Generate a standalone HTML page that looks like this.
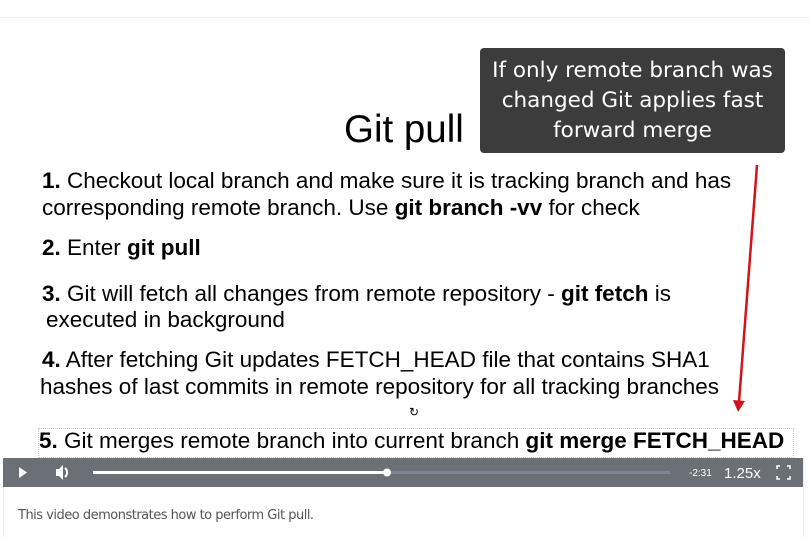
<!DOCTYPE html>
<html><head><style>
body{margin:0;width:809px;height:537px;background:#fff;position:relative;overflow:hidden;font-family:"Liberation Sans",Arial,sans-serif;}
.a{position:absolute;white-space:nowrap;color:#000;}
.t{font-size:22.5px;left:42px;}
</style></head><body>
<div style="position:absolute;left:0;top:17px;width:809px;height:1px;background:#eee"></div>
<div style="position:absolute;left:3px;top:458px;width:1px;height:79px;background:#eee"></div>
<div style="position:absolute;left:803px;top:458px;width:1px;height:79px;background:#eee"></div>
<div class="a" style="left:344px;top:108px;font-size:38.5px">Git pull</div>
<div style="position:absolute;left:480px;top:48px;width:305px;height:105px;background:#3c3c3c;border-radius:4px;color:#fff;font-family:'DejaVu Sans',sans-serif;font-size:21.5px;line-height:30px;text-align:center;padding-top:8px;box-sizing:border-box">If only remote branch was<br>changed Git applies fast<br>forward merge</div>
<svg style="position:absolute;left:0;top:0" width="809" height="537"><line x1="757" y1="165" x2="739" y2="402" stroke="#d0141a" stroke-width="2.5"/><polygon points="733,400 745,401 738,412" fill="#d0141a"/></svg>
<div class="a t" style="top:168px"><b>1.</b> Checkout local branch and make sure it is tracking branch and has</div>
<div class="a t" style="top:195px">corresponding remote branch. Use <b>git branch -vv</b> for check</div>
<div class="a t" style="top:235px"><b>2.</b> Enter <b>git pull</b></div>
<div class="a t" style="top:281px"><b>3.</b> Git will fetch all changes from remote repository - <b>git fetch</b> is</div>
<div class="a t" style="top:307px;left:46px">executed in background</div>
<div class="a t" style="top:347px"><b>4.</b> After fetching Git updates FETCH_HEAD file that contains SHA1</div>
<div class="a t" style="top:374px;left:40px">hashes of last commits in remote repository for all tracking branches</div>
<div class="a" style="left:409px;top:405px;font-size:12px">↻</div>
<div style="position:absolute;left:38px;top:428px;width:754px;height:28px;border:1px dotted #ccc"></div>
<div class="a t" style="top:428px;left:39px;font-size:22.5px"><b>5.</b> Git merges remote branch into current branch <b>git merge FETCH_HEAD</b></div>
<div style="position:absolute;left:3px;top:458px;width:800px;height:29px;background:#6b7077"></div>
<svg style="position:absolute;left:0;top:458px" width="809" height="29">
<polygon points="19,9 19,20 27,14.5" fill="#fff"/>
<path d="M56,11h3l4,-4v15l-4,-4h-3z" fill="#fff"/><path d="M65,10a6,6 0 0 1 0,9" stroke="#fff" stroke-width="2" fill="none"/>
<rect x="93" y="13" width="577" height="3" fill="#7d8597"/>
<rect x="93" y="13" width="294" height="3" fill="#fff"/>
<circle cx="387" cy="14.5" r="4" fill="#fff"/>
<text x="689" y="18" fill="#fff" font-size="10" font-family="Liberation Sans">-2:31</text>
<text x="724" y="20" fill="#fff" font-size="15" font-family="Liberation Sans">1.25x</text>
<path d="M777,11v-3h3M787,8h3v3M790,18v3h-3M780,21h-3v-3" stroke="#fff" stroke-width="1.5" fill="none"/>
</svg>
<div class="a" style="left:18px;top:508px;font-size:13px;color:#555;font-family:'DejaVu Sans',sans-serif;letter-spacing:-0.5px">This video demonstrates how to perform Git pull.</div>
</body></html>
